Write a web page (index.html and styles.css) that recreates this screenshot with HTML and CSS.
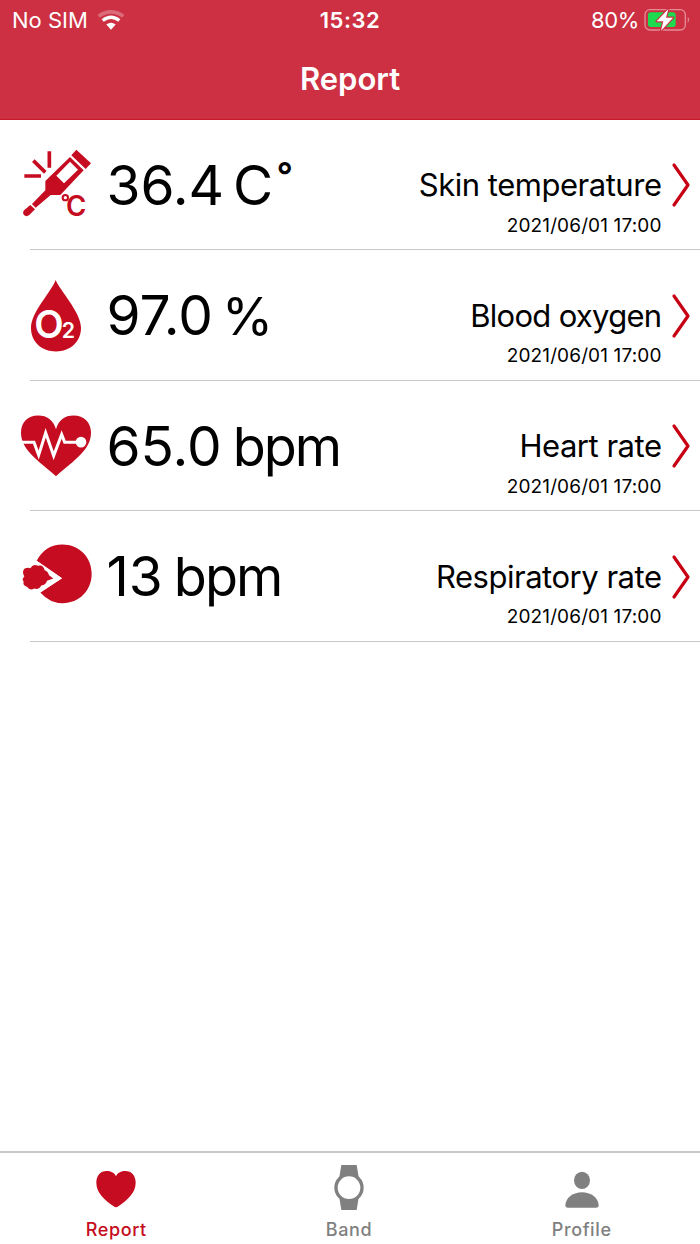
FILE: index.html
```html
<!DOCTYPE html>
<html lang="en">
<head>
  <meta charset="UTF-8">
  <meta name="viewport" content="width=device-width, initial-scale=1.0">
  <title>Report</title>
  <link rel="stylesheet" href="styles.css">
</head>
<body>

  <header>
    <div class="status-bar">
      <div class="carrier">
        <span>No SIM</span>
        <svg class="wifi" viewBox="0 0 84 62">
          <path d="M5 18Q42-8 79 18" fill="none" stroke="#dc6b79" stroke-width="11"/>
          <path d="M17 31Q42 11 67 31" fill="none" stroke="#fff" stroke-width="10"/>
          <path d="M28 43Q42 32 56 43L42 59Z" fill="#fff"/>
        </svg>
      </div>
      <div class="clock">15:32</div>
      <div class="power">
        <span>80%</span>
        <svg class="battery" viewBox="0 0 138 72">
          <rect x="3" y="5" width="121" height="61" rx="15" fill="none" stroke="#e38b96" stroke-width="4"/>
          <path d="M131 26Q140 35 131 45Z" fill="#e38b96"/>
          <rect x="12" y="13" width="83" height="44" rx="8" fill="#1dda4f"/>
          <path d="M73 3L38 40H58L51 68L87 29H66Z" fill="#fff" stroke="#cc3042" stroke-width="7" paint-order="stroke" stroke-linejoin="round"/>
        </svg>
      </div>
    </div>
    <h1>Report</h1>
  </header>

  <main>
    <div class="row">
      <svg class="icon" viewBox="0 0 291 270">
        <path d="M118 34V83M70 62L106 97M43 108H93" fill="none" stroke="#c50c20" stroke-width="11"/>
        <path d="M199 29L243 70L227 87L184 46Z"/>
        <path fill-rule="evenodd" d="M180 51L221 91L151 165H122L77 203L66 192L106 151V123ZM180 65L139 107L162 130L204 89Z"/>
        <path d="M61 195L75 208L58 225Q49 232 42 225Q36 217 43 210Z"/>
        <circle cx="166" cy="173" r="8" fill="none" stroke="#c50c20" stroke-width="6"/>
        <text class="celsius" x="168" y="227" textLength="61" lengthAdjust="spacingAndGlyphs">C</text>
      </svg>
      <div class="value">36.4<span class="unit">C</span><span class="degree">°</span></div>
      <div class="info">
        <div class="name">Skin temperature</div>
        <div class="date">2021/06/01 17:00</div>
      </div>
      <svg class="arrow" viewBox="0 0 20 46"><path d="M3 3L17 23L3 43"/></svg>
    </div>

    <div class="row">
      <svg class="icon" viewBox="0 1.8 291 270">
        <path d="M137 29C148 58 213 126 213 172C213 215 180 243 138 243C95 243 63 215 63 172C63 126 125 63 137 29Z"/>
        <text class="oxygen" x="73" y="204">O<tspan class="small">2</tspan></text>
      </svg>
      <div class="value">97.0<span class="unit percent">%</span></div>
      <div class="info">
        <div class="name oxygen-name">Blood oxygen</div>
        <div class="date">2021/06/01 17:00</div>
      </div>
      <svg class="arrow" viewBox="0 0 20 46"><path d="M3 3L17 23L3 43"/></svg>
    </div>

    <div class="row">
      <svg class="icon" viewBox="0 3.6 291 270">
        <path d="M138 88C146 61 163 47 191 47C222 47 243 68 243 98C243 149 197 178 138 229C79 178 33 149 33 98C33 68 53 47 84 47C112 47 130 61 138 88Z"/>
        <path d="M33 127H72L86 166L107 99L131 168L155 104L164 127H205" fill="none" stroke="#fff" stroke-width="9"/>
        <circle cx="213" cy="127" r="16" fill="#fff"/>
      </svg>
      <div class="value">65.0<span class="unit bpm">bpm</span></div>
      <div class="info">
        <div class="name">Heart rate</div>
        <div class="date">2021/06/01 17:00</div>
      </div>
      <svg class="arrow" viewBox="0 0 20 46"><path d="M3 3L17 23L3 43"/></svg>
    </div>

    <div class="row">
      <svg class="icon" viewBox="0 5.4 291 270">
        <path d="M80 92Q106 43 157 43C208 43 245 82 245 131C245 182 207 219 158 219Q119 219 91 187L156 144Z"/>
        <path d="M80 92L156 144L91 187L78 178L113 151L130 145L118 133L72 100Z" fill="#fff"/>
        <path d="M130 145L111 152Q108 164 94 166Q86 180 73 175Q59 182 51 170Q37 166 41 154Q34 148 43 139Q35 126 43 116Q53 110 61 114Q70 99 84 107Q99 101 104 120Q114 123 117 135Z"/>
      </svg>
      <div class="value">13<span class="unit bpm">bpm</span></div>
      <div class="info">
        <div class="name">Respiratory rate</div>
        <div class="date">2021/06/01 17:00</div>
      </div>
      <svg class="arrow" viewBox="0 0 20 46"><path d="M3 3L17 23L3 43"/></svg>
    </div>
  </main>

  <nav>
    <div class="tab active">
      <svg viewBox="0 0 150 150">
        <path d="M75 43C80 31 91 27 103 27C122 27 134 41 134 62C134 93 109 114 82 133Q75 139 68 133C41 114 16 93 16 62C16 41 28 27 47 27C59 27 70 31 75 43Z"/>
      </svg>
      <span>Report</span>
    </div>
    <div class="tab">
      <svg viewBox="0 0 150 150">
        <path d="M52 9H98L104 45H46ZM46 107H104L98 144H52Z"/>
        <circle cx="75" cy="77" r="39" fill="#fff" stroke="#808080" stroke-width="10"/>
      </svg>
      <span>Band</span>
    </div>
    <div class="tab">
      <svg viewBox="0 0 150 150">
        <ellipse cx="75" cy="55" rx="24" ry="26"/>
        <path d="M25 129C27 106 49 91 75 91C101 91 123 106 125 129Q125 137 117 137H33Q25 137 25 129Z"/>
      </svg>
      <span>Profile</span>
    </div>
  </nav>

</body>
</html>
```

FILE: styles.css
```css
body {
  margin: 0;
  font-family: Inter, "Liberation Sans", sans-serif;
  background-color: #fff;
  color: #000;
  display: flex;
  flex-direction: column;
  height: 1244px;
}

header {
  box-sizing: border-box;
  height: 119.5px;
  background-color: #cc3042;
  border-bottom: 1px solid #c8192c;
  color: #fff;
}

.status-bar {
  display: grid;
  grid-template-columns: 1fr auto 1fr;
  align-items: center;
  height: 40px;
  padding: 0 10px 0 12px;
  font-size: 22px;
}

.carrier, .power {
  display: flex;
  align-items: center;
}

.wifi {
  width: 28px;
  height: 21px;
  margin-left: 9px;
}

.clock {
  font-weight: 600;
  letter-spacing: 0.5px;
  margin-right: 2px;
}

.power {
  justify-content: flex-end;
  letter-spacing: -0.4px;
}

.battery {
  width: 46px;
  height: 24px;
  margin-left: 5px;
}

h1 {
  margin: 18px 0 0;
  font-size: 31px;
  line-height: 42px;
  font-weight: 600;
  text-align: center;
}

main {
  flex: 1;
}

.row {
  display: flex;
  align-items: flex-start;
  height: 130.5px;
  padding-left: 10px;
  background: linear-gradient(#c8c8c8, #c8c8c8) 30px 100% / 100% 1px no-repeat;
}

.icon {
  width: 97px;
  height: 90px;
  margin-top: 20.5px;
  fill: #c50c20;
}

.celsius {
  font-size: 85px;
  font-weight: 600;
}

.oxygen {
  font-size: 115px;
  font-weight: 600;
  letter-spacing: -6px;
  fill: #fff;
}

.small {
  font-size: 64px;
}

.value {
  margin: 32px 0 0 -0.5px;
  font-size: 55px;
  line-height: 66px;
  white-space: nowrap;
}

.unit {
  margin-left: 9px;
  letter-spacing: -1.8px;
}

.percent {
  font-size: 52px;
}

.bpm {
  margin-left: 11px;
  font-size: 54px;
  letter-spacing: -2px;
}

.degree {
  display: inline-block;
  margin-left: 5px;
  font-size: 36px;
  font-weight: 600;
  line-height: 30px;
  vertical-align: 17px;
}

.info {
  margin-left: auto;
  text-align: right;
}

.name {
  margin-top: 46.5px;
  font-size: 31px;
  line-height: 38px;
  letter-spacing: -0.48px;
}

.oxygen-name {
  letter-spacing: -0.7px;
}

.date {
  margin-top: 9.5px;
  font-size: 19px;
  line-height: 24px;
  letter-spacing: 0.13px;
}

.arrow {
  width: 20px;
  height: 46px;
  margin: 42.5px 9px 0 9.5px;
  fill: none;
  stroke: #c70013;
  stroke-width: 3.2;
  stroke-linecap: round;
  stroke-linejoin: round;
}

nav {
  display: flex;
  box-sizing: border-box;
  height: 93px;
  padding-right: 2px;
  border-top: 2px solid #c9c9c9;
}

.tab {
  flex: 1;
  display: flex;
  flex-direction: column;
  align-items: center;
  color: #808080;
  fill: #808080;
  font-size: 18px;
  font-weight: 500;
  line-height: 24px;
  letter-spacing: 0.6px;
}

.tab svg {
  width: 50px;
  height: 50px;
  margin: 9px 0 6px;
}

.tab.active {
  color: #c50c20;
  fill: #c50c20;
}
```
